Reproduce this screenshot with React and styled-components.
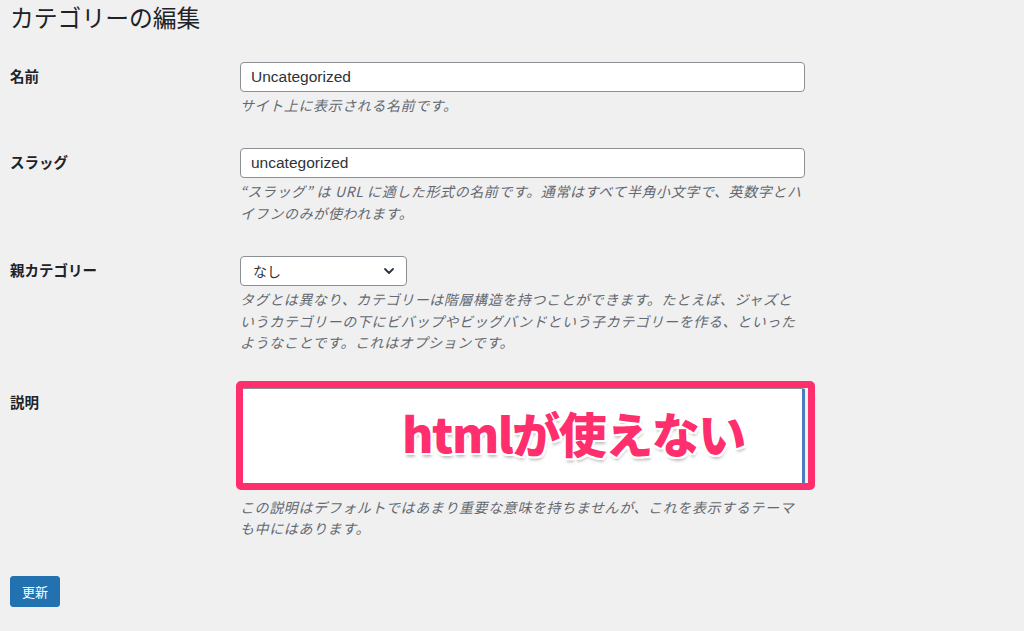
import React from "react";
import styled, { createGlobalStyle } from "styled-components";

const GlobalStyle = createGlobalStyle`
  html, body {
    margin: 0;
    padding: 0;
    background: #f0f0f1;
  }
  body {
    font-family: "Liberation Sans", "Noto Sans CJK JP", sans-serif;
    color: #1d2327;
  }
`;

const Page = styled.div`
  padding: 0 10px;
  min-height: 631px;
  box-sizing: border-box;
`;

const Title = styled.h1`
  font-family: "Noto Sans CJK JP", sans-serif;
  font-size: 23.8px;
  font-weight: 400;
  line-height: 1.3;
  margin: 0 0 13px;
  padding-top: 2px;
  color: #1d2327;
`;

const Row = styled.div`
  display: grid;
  grid-template-columns: 230px 565px;
  padding: 16px 0;
`;

const Label = styled.label`
  font-family: "Noto Sans CJK JP", sans-serif;
  font-size: 14.5px;
  font-weight: 700;
  line-height: 1.3;
  padding-top: ${(p) => p.$top || 5}px;
  color: #1d2327;
`;

const Field = styled.div`
  display: flex;
  flex-direction: column;
  align-items: flex-start;
`;

const TextInput = styled.div`
  box-sizing: border-box;
  width: 565px;
  height: 30px;
  padding: 0 10px;
  background: #fff;
  border: 1px solid #8c8f94;
  border-radius: 4px;
  display: flex;
  align-items: center;
  font-family: "Liberation Sans", sans-serif;
  font-size: 15.5px;
  color: #2c3338;
`;

const Select = styled.div`
  box-sizing: border-box;
  width: 167px;
  height: 30px;
  padding: 0 10px 0 12px;
  background: #fff;
  border: 1px solid #8c8f94;
  border-radius: 4px;
  display: flex;
  align-items: center;
  justify-content: space-between;
  font-family: "Noto Sans CJK JP", sans-serif;
  font-size: 14px;
  color: #2c3338;
`;

const Help = styled.p`
  margin: 3px 0 0;
  font-family: "Noto Sans CJK JP", sans-serif;
  font-size: 14px;
  letter-spacing: 0.6px;
  line-height: 21.5px;
  font-style: italic;
  color: #646970;
  width: 565px;
  margin-top: ${(p) => p.$gap || 3}px;
`;

const AreaWrap = styled.div`
  position: relative;
  margin-top: 2px;
`;

const TextArea = styled.div`
  box-sizing: border-box;
  width: 565px;
  height: 96px;
  background: #fff;
  border: 1px solid #8c8f94;
  border-right: 3px solid #4a7cc0;
  border-radius: 2px;
`;

const Highlight = styled.div`
  position: absolute;
  left: -4px;
  top: -7px;
  width: 579px;
  height: 109px;
  box-sizing: border-box;
  border: 7px solid #fe2f6c;
  border-radius: 5px;
  pointer-events: none;
`;

const Note = styled.div`
  position: absolute;
  left: 162px;
  top: 20px;
  font-family: "Noto Sans CJK JP", sans-serif;
  font-weight: 900;
  font-size: 48px;
  line-height: 1;
  letter-spacing: -1.5px;
  color: #fe2f6c;
  white-space: nowrap;
  text-shadow:
    2px 0 0 #fff, -2px 0 0 #fff, 0 2px 0 #fff, 0 -2px 0 #fff,
    2px 2px 0 #fff, -2px -2px 0 #fff, 2px -2px 0 #fff, -2px 2px 0 #fff,
    1px 4px 3px rgba(0, 0, 0, 0.25);
`;

const Submit = styled.div`
  padding-top: 20px;
`;

const Button = styled.button`
  background: #2271b1;
  border: 1px solid #2271b1;
  border-radius: 3px;
  color: #fff;
  font-family: "Noto Sans CJK JP", sans-serif;
  font-size: 13px;
  height: 31px;
  padding: 0 11px;
  cursor: pointer;
`;

const Chevron = () => (
  <svg width="14" height="14" viewBox="0 0 14 14" fill="none">
    <path d="M3 5l4 4 4-4" stroke="#2c3338" strokeWidth="1.8" strokeLinecap="round" strokeLinejoin="round" />
  </svg>
);

const App = () => {
  return (
    <Page>
      <GlobalStyle />
      <Title>カテゴリーの編集</Title>

      <Row>
        <Label>名前</Label>
        <Field>
          <TextInput>Uncategorized</TextInput>
          <Help>サイト上に表示される名前です。</Help>
        </Field>
      </Row>

      <Row>
        <Label>スラッグ</Label>
        <Field>
          <TextInput>uncategorized</TextInput>
          <Help>
            “スラッグ” は URL に適した形式の名前です。通常はすべて半角小文字で、英数字とハイフンのみが使われます。
          </Help>
        </Field>
      </Row>

      <Row>
        <Label>親カテゴリー</Label>
        <Field>
          <Select>
            なし
            <Chevron />
          </Select>
          <Help>
            タグとは異なり、カテゴリーは階層構造を持つことができます。たとえば、ジャズというカテゴリーの下にビバップやビッグバンドという子カテゴリーを作る、といったようなことです。これはオプションです。
          </Help>
        </Field>
      </Row>

      <Row>
        <Label $top={7}>説明</Label>
        <Field>
          <AreaWrap>
            <TextArea />
            <Highlight />
            <Note>htmlが使えない</Note>
          </AreaWrap>
          <Help $gap={13}>
            この説明はデフォルトではあまり重要な意味を持ちませんが、これを表示するテーマも中にはあります。
          </Help>
        </Field>
      </Row>

      <Submit>
        <Button>更新</Button>
      </Submit>
    </Page>
  );
};

export default App;
